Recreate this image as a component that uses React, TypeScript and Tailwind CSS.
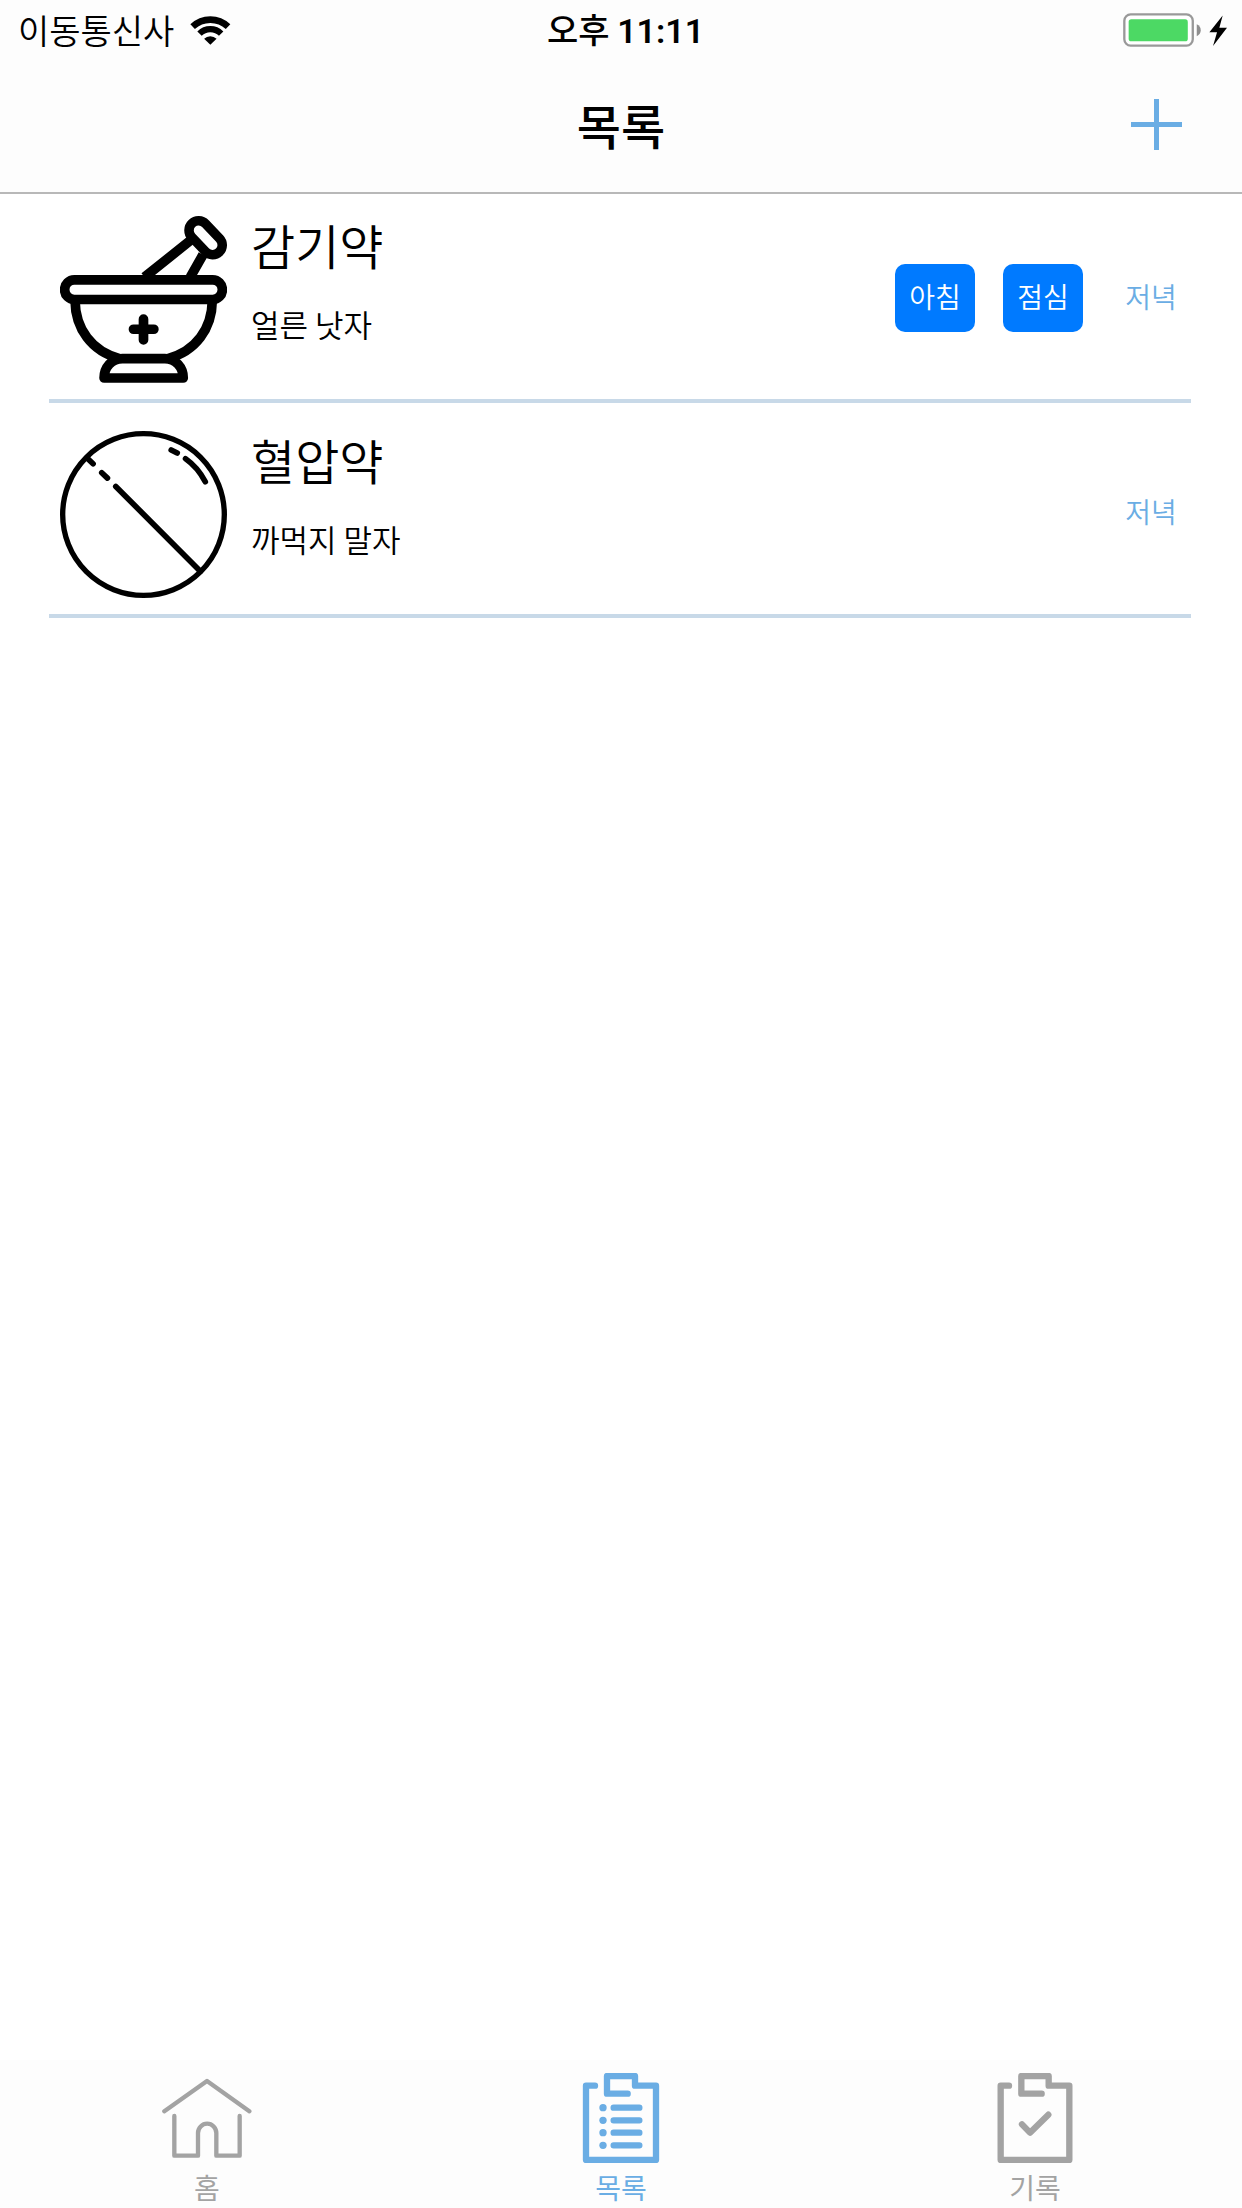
import type { ReactNode } from "react";

type Medicine = {
  name: string;
  memo: string;
  icon: ReactNode;
  active: string[];
};

const TIMES = ["아침", "점심", "저녁"];

function WifiIcon() {
  return (
    <svg className="h-[30px] w-[41px]" viewBox="568 44 125 90" fill="none" stroke="#000" aria-hidden="true">
      <path d="M576 79A78 78 0 0 1 684 79" strokeWidth="20" />
      <path d="M597 100A47 47 0 0 1 663 100" strokeWidth="19" />
      <path d="M630 134L611 116A27 27 0 0 1 649 116Z" fill="#000" stroke="none" />
    </svg>
  );
}

function BatteryIcon() {
  return (
    <svg className="h-[34px] w-[104px]" viewBox="127 38 313 102" role="img" aria-label="충전 중">
      <rect x="131" y="42" width="206" height="94" rx="19" fill="#fff" stroke="#999" strokeWidth="7" />
      <rect x="144" y="57" width="178" height="66" rx="8" fill="#4cd964" />
      <path d="M349 72Q361 78 361 90Q361 102 349 108Z" fill="#8e8e8e" />
      <path d="M427 45L387 96H410L398 137L440 82H417Z" fill="#000" />
    </svg>
  );
}

function MortarIcon() {
  return (
    <svg
      className="size-[167px] shrink-0"
      viewBox="60 47 500 500"
      fill="none"
      stroke="#000"
      strokeWidth="29"
      strokeLinejoin="round"
      aria-hidden="true"
    >
      <path d="M313 230L452 119M450 230L488 163" />
      <path d="M475 90L517 134" strokeWidth="86" strokeLinecap="round" />
      <path d="M475 90L517 134" stroke="#fff" strokeWidth="29" strokeLinecap="round" />
      <rect x="74" y="238" width="472" height="59" rx="29" />
      <path d="M105 300C106 385 155 452 238 474M516 300C515 385 466 452 383 474" />
      <path d="M192 532C192 500 215 474 247 474H374C406 474 429 500 429 532Z" />
      <path d="M310 356V418M280 386H341" strokeLinecap="round" />
    </svg>
  );
}

function PillIcon() {
  return (
    <svg
      className="size-[167px] shrink-0"
      viewBox="60 48 500 500"
      fill="none"
      stroke="#000"
      strokeWidth="17"
      strokeLinecap="round"
      aria-hidden="true"
    >
      <circle cx="310" cy="298" r="242" strokeWidth="16" />
      <path d="M141 129L159 146M185 173L202 189M227 214L480 468" />
      <path d="M393 105L411 114M436 131Q473 157 495 200" />
    </svg>
  );
}

function HomeIcon() {
  return (
    <svg
      className="size-[90px]"
      viewBox="66 99 270 270"
      fill="none"
      stroke="currentColor"
      strokeWidth="13"
      strokeLinecap="round"
      strokeLinejoin="round"
      aria-hidden="true"
    >
      <path d="M73 214L201 123L328 214" />
      <path d="M103 228V347H174V279A27.5 28 0 0 1 229 279V347H299V228" />
    </svg>
  );
}

function ListIcon() {
  return (
    <svg
      className="size-[90px]"
      viewBox="48 99 270 270"
      fill="none"
      stroke="currentColor"
      strokeWidth="19"
      strokeLinecap="round"
      strokeLinejoin="round"
      aria-hidden="true"
    >
      <path d="M105 137H78V360H288V137H225V108H141V161H203" />
      <path d="M161 203H238M161 241H238M161 278H238M161 316H238" />
      <g fill="currentColor" stroke="none">
        <circle cx="129" cy="203" r="11" />
        <circle cx="129" cy="241" r="11" />
        <circle cx="129" cy="278" r="11" />
        <circle cx="129" cy="316" r="11" />
      </g>
    </svg>
  );
}

function RecordIcon() {
  return (
    <svg
      className="size-[90px]"
      viewBox="60 99 270 270"
      fill="none"
      stroke="currentColor"
      strokeWidth="19"
      strokeLinecap="round"
      strokeLinejoin="round"
      aria-hidden="true"
    >
      <path d="M117 137H92V360H298V137H236V108H154V161H215" />
      <path d="M156 253L180 278L235 224" />
    </svg>
  );
}

const MEDICINES: Medicine[] = [
  { name: "감기약", memo: "얼른 낫자", icon: <MortarIcon />, active: ["아침", "점심"] },
  { name: "혈압약", memo: "까먹지 말자", icon: <PillIcon />, active: [] },
];

const TABS = [
  { label: "홈", icon: <HomeIcon />, current: false },
  { label: "목록", icon: <ListIcon />, current: true },
  { label: "기록", icon: <RecordIcon />, current: false },
];

function TimeChip({ medicine, time }: { medicine: Medicine; time: string }) {
  if (medicine.active.includes(time)) {
    return (
      <button type="button" className="h-[68px] w-20 rounded-[10px] bg-[#007aff] pb-1 text-[28px] leading-8 font-[350] text-white">
        {time}
      </button>
    );
  }
  if (time !== "저녁") return null;
  return (
    <button type="button" className="h-[68px] w-20 rounded-[10px] pb-1 text-[28px] leading-8 font-[350] text-[#6aade4]">
      {time}
    </button>
  );
}

function MedicineRow({ medicine }: { medicine: Medicine }) {
  return (
    <li className="flex items-start border-b-4 border-[#c8d9e8] pt-[22px] pb-4 pl-[11px]">
      {medicine.icon}
      <div className="ml-6 flex-1 font-[350]">
        <h2 className="text-[48px] leading-[56px]">{medicine.name}</h2>
        <p className="mt-8 text-[31px] leading-10">{medicine.memo}</p>
      </div>
      <div className="mt-12 flex gap-7">
        {TIMES.map((time) => (
          <TimeChip key={time} medicine={medicine} time={time} />
        ))}
      </div>
    </li>
  );
}

export default function App() {
  return (
    <div className="flex min-h-screen flex-col bg-white font-['Noto_Sans_CJK_KR',sans-serif] text-black">
      <header className="border-b-2 border-[#b8b8b8] bg-[#fdfdfd]">
        <div className="grid h-[60px] grid-cols-3 items-center pr-[15px] pl-[18px] text-[34px] leading-10">
          <div className="flex items-center gap-4">
            <span className="font-[350]">이동통신사</span>
            <WifiIcon />
          </div>
          <div className="pl-1.5 text-center font-medium">
            오후 <span className="font-['Roboto',sans-serif] font-semibold">11:11</span>
          </div>
          <div className="flex justify-end">
            <BatteryIcon />
          </div>
        </div>
        <div className="grid h-[132px] grid-cols-3 items-center pr-[60px] pb-1 pl-[60px]">
          <h1 className="col-start-2 text-center text-[48px] leading-[64px] font-medium">목록</h1>
          <button type="button" aria-label="추가" className="justify-self-end text-[#6aade4]">
            <svg className="size-[51px]" viewBox="0 0 51 51" fill="none" stroke="currentColor" strokeWidth="5" aria-hidden="true">
              <path d="M25.5 0V51M0 25.5H51" />
            </svg>
          </button>
        </div>
      </header>

      <main className="flex-1 pr-[51px] pl-[49px]">
        <ul className="flex flex-col gap-[6px]">
          {MEDICINES.map((medicine) => (
            <MedicineRow key={medicine.name} medicine={medicine} />
          ))}
        </ul>
      </main>

      <nav className="grid grid-cols-3 bg-[#fdfdfd] pt-[13px] pb-px">
        {TABS.map((tab) => (
          <a
            key={tab.label}
            href="#"
            aria-current={tab.current ? "page" : undefined}
            className={
              tab.current
                ? "flex flex-col items-center gap-1 text-[#6aade4]"
                : "flex flex-col items-center gap-1 text-[#a3a3a3]"
            }
          >
            {tab.icon}
            <span className="text-[28px] leading-10">{tab.label}</span>
          </a>
        ))}
      </nav>
    </div>
  );
}
